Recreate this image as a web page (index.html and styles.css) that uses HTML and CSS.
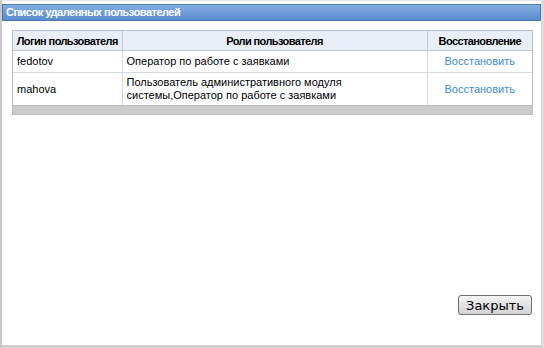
FILE: index.html
```html
<!DOCTYPE html>
<html lang="ru">
<head>
<meta charset="utf-8">
<link rel="stylesheet" href="styles.css">
</head>
<body>
<div class="window">
  <div class="titlebar">Список удаленных пользователей</div>
  <div class="content">
    <div class="grid">
      <table class="users">
        <colgroup>
          <col class="w-login">
          <col class="w-roles">
          <col class="w-rest">
        </colgroup>
        <thead>
          <tr>
            <th>Логин пользователя</th>
            <th>Роли пользователя</th>
            <th>Восстановление</th>
          </tr>
        </thead>
        <tbody>
          <tr class="r1">
            <td>fedotov</td>
            <td>Оператор по работе с заявками</td>
            <td class="act"><a href="#">Восстановить</a></td>
          </tr>
          <tr class="r2">
            <td>mahova</td>
            <td>Пользователь административного модуля<br>системы,Оператор по работе с заявками</td>
            <td class="act"><a href="#">Восстановить</a></td>
          </tr>
        </tbody>
      </table>
      <div class="footerbar"></div>
    </div>
    <div class="spacer"></div>
    <div class="buttons">
      <button class="btn">Закрыть</button>
    </div>
  </div>
</div>
</body>
</html>
```
FILE: styles.css
```css
html, body {
  margin: 0;
  padding: 0;
  background: #ffffff;
}
body {
  font-family: "Liberation Sans", Arial, sans-serif;
  font-size: 11px;
  color: #000;
}
.window {
  width: 544px;
  height: 348px;
  box-sizing: border-box;
  border-left: 2px solid #c9c9c9;
  border-right: 3px solid #dcdcdc;
  border-bottom: 3px solid #cfcfcf;
  border-top: 1px solid #e6e6e6;
  padding-top: 3px;
  display: flex;
  flex-direction: column;
}
.titlebar {
  height: 17px;
  box-sizing: border-box;
  border: 1px solid #4a78b0;
  background: linear-gradient(#86afe3, #6a9ad6 55%, #5a8dcc);
  color: #fff;
  font-weight: bold;
  letter-spacing: -0.5px;
  line-height: 15px;
  padding-left: 3px;
  white-space: nowrap;
}
.content {
  flex: 1;
  display: flex;
  flex-direction: column;
  padding: 9px 8px 0 10px;
}
.grid {
  border: 1px solid #b7bec8;
}
.users {
  width: 100%;
  border-collapse: collapse;
  table-layout: fixed;
}
.w-login { width: 109px; }
.w-rest { width: 105px; }
.users th {
  background: #e9eef7;
  font-weight: bold;
  letter-spacing: -0.6px;
  height: 19px;
  padding: 0 3px;
  text-align: center;
  white-space: nowrap;
  border-left: 1px solid #c3c9d3;
  border-bottom: 1px solid #c3c9d3;
}
.users th:first-child { border-left: none; }
.users td {
  padding: 0 4px;
  text-align: left;
  vertical-align: middle;
  border-left: 1px solid #d6d9de;
  border-bottom: 1px solid #d6d9de;
  line-height: 13px;
}
.users td:first-child { border-left: none; }
.users tr.r1 td { height: 21px; }
.users tr.r2 td { height: 32px; border-bottom: none; }
.users td.act { text-align: center; }
.users a {
  color: #3d8bd0;
  text-decoration: none;
}
.footerbar {
  height: 8px;
  background: #cbcbcb;
  border-top: 1px solid #bdbdbd;
}
.spacer { flex: 1; }
.buttons {
  display: flex;
  justify-content: flex-end;
  padding: 0 1px 30px 0;
}
.btn {
  width: 74px;
  height: 20px;
  font-family: "DejaVu Sans", sans-serif;
  font-size: 13px;
  color: #000;
  border: 1px solid #707070;
  border-radius: 3px;
  background: linear-gradient(#f4f4f4, #e2e2e2 50%, #d4d4d4);
  padding: 0;
}
```
